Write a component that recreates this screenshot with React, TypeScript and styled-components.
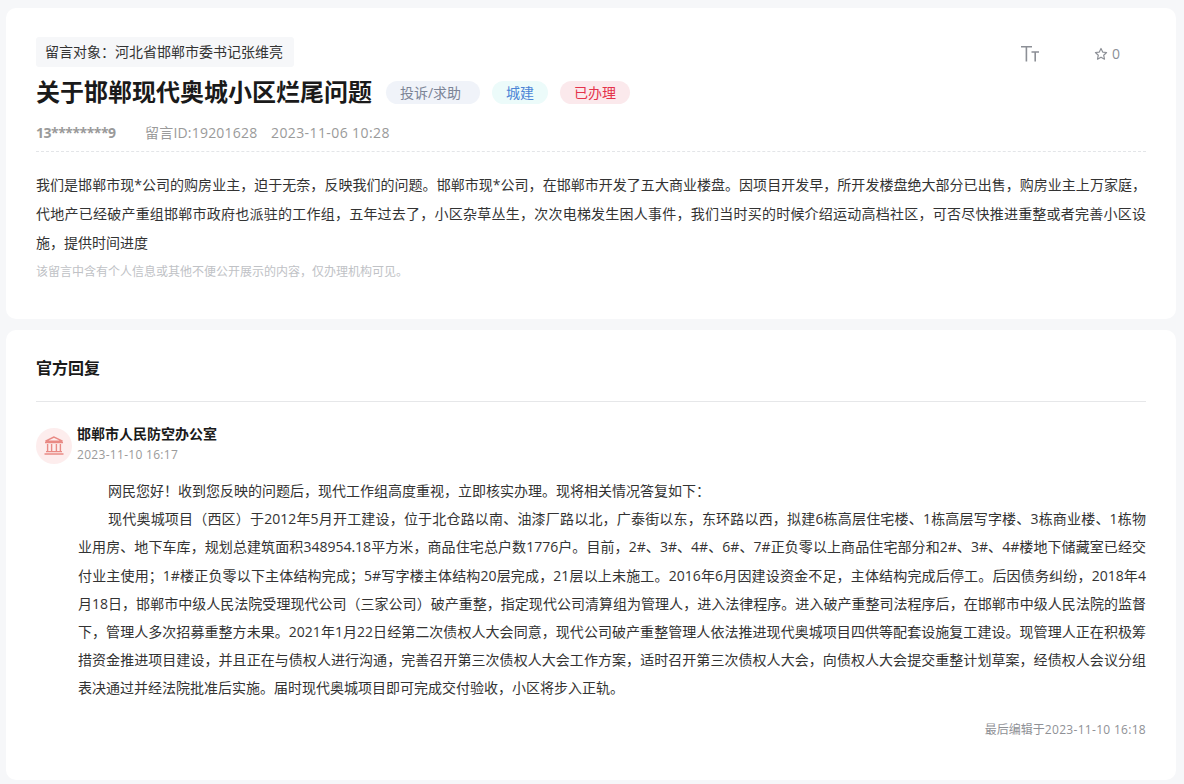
import React from "react";
import styled, { createGlobalStyle } from "styled-components";

const Global = createGlobalStyle`
  html, body { margin: 0; padding: 0; background: #f6f7f9; }
  body { font-family: "Open Sans", "Noto Sans CJK SC", sans-serif; }
`;
const Page = styled.div`
  width: 1184px; height: 784px; overflow: hidden; box-sizing: border-box;
  padding: 8px 8px 0 6px; display: flex; flex-direction: column; gap: 11px;
`;
const Card = styled.section<{ $h: number }>`
  background: #fff; border-radius: 10px; height: ${p => p.$h}px; box-sizing: border-box;
  padding: 29px 30px 0; flex: none;
`;
const TopRow = styled.div`display: flex; justify-content: space-between; align-items: flex-start;`;
const Target = styled.div`
  background: #f6f7f9; border-radius: 3px; height: 30px; line-height: 30px; padding: 0 11px 0 9px;
  font-size: 14px; color: #333;
`;
const Tools = styled.div`display: flex; align-items: center; color: #8c8f96; margin-top: 7px; padding-right: 26px;`;
const Fav = styled.span`display: inline-flex; align-items: center; gap: 4px; font-size: 14px; margin-left: 55px;`;
const TitleRow = styled.div`display: flex; align-items: center; margin-top: 10px; height: 30px;`;
const Title = styled.h1`margin: 0 14px 0 0; font-size: 24px; font-weight: 700; color: #1a1a1a; line-height: 30px;`;
const Tag = styled.span<{ $bg: string; $fg: string; $w: number; $shift?: number }>`
  width: ${p => p.$w}px; height: 23px; line-height: 23px; text-align: center; border-radius: 12px; font-size: 14px;
  box-sizing: border-box; padding-right: ${p => p.$shift ?? 0}px;
  background: ${p => p.$bg}; color: ${p => p.$fg}; margin-right: 12px;
`;
const Meta = styled.div`
  display: flex; margin-top: 14px; height: 30px; line-height: 24px; font-size: 14px; color: #9a9a9a;
  border-bottom: 1px dashed #e3e5e8;
`;
const User = styled.b`font-weight: 700; width: 109px; letter-spacing: -0.5px;`;
const MetaId = styled.span`width: 126px; letter-spacing: 0.2px;`;
const MetaDate = styled.span`letter-spacing: 0.4px;`;
const Body = styled.p`margin: 18px 0 0; font-size: 14px; line-height: 29px; color: #333; text-align: justify;`;
const Note = styled.p`margin: 5px 0 0; font-size: 12px; line-height: 20px; color: #c0c2c6;`;
const ReplyHead = styled.h2`
  margin: -1px 0 0; font-size: 16px; font-weight: 700; color: #1a1a1a; line-height: 20px; height: 43px;
  border-bottom: 1px solid #e6e7e9;
`;
const Org = styled.div`display: flex; gap: 5px; margin-top: 24px; align-items: center;`;
const Avatar = styled.div`
  width: 36px; height: 36px; border-radius: 50%; background: #fdeded; display: flex; align-items: center; justify-content: center;
`;
const OrgName = styled.div`font-size: 14px; font-weight: 700; color: #1a1a1a; line-height: 20px; margin-top: -2px;`;
const OrgDate = styled.div`font-size: 12px; color: #9a9a9a; line-height: 20px; margin-top: 1px; letter-spacing: 0.3px;`;
const Reply = styled.div`margin: 12px 0 0 42px; font-size: 14px; line-height: 28.2px; color: #333; text-align: justify;`;
const Indent = styled.p`margin: 0; text-indent: 2.15em;`;
const Edited = styled.div`margin-top: 17px; text-align: right; font-size: 12px; line-height: 20px; color: #8f9196;`;
const EditedDate = styled.span`letter-spacing: 0.3px;`;

export default function App() {
  return (
    <Page>
      <Global />
      <Card $h={311}>
        <TopRow>
          <Target>留言对象：河北省邯郸市委书记张维亮</Target>
          <Tools>
            <svg width="18" height="16" viewBox="0 0 18 16" fill="none" stroke="currentColor" strokeWidth="1.6" aria-label="字号">
              <path d="M0 .8h11M5.4 .8V15.5M10.5 6h7.5M14.2 6v9.5" />
            </svg>
            <Fav>
              <svg width="14" height="14" viewBox="0 0 24 24" fill="none" stroke="currentColor" strokeWidth="2" strokeLinejoin="round">
                <path d="M12 2.5l2.9 6.2 6.7.8-5 4.6 1.4 6.7L12 17.4l-6 3.4 1.4-6.7-5-4.6 6.7-.8z" />
              </svg>
              0
            </Fav>
          </Tools>
        </TopRow>
        <TitleRow>
          <Title>关于邯郸现代奥城小区烂尾问题</Title>
          <Tag $bg="#f0f3f9" $fg="#7c8496" $w={94} $shift={5}>投诉/求助</Tag>
          <Tag $bg="#ecfbfa" $fg="#4b84d6" $w={56}>城建</Tag>
          <Tag $bg="#fbe9ec" $fg="#e4334b" $w={70}>已办理</Tag>
        </TitleRow>
        <Meta>
          <User>13********9</User>
          <MetaId>留言ID:19201628</MetaId>
          <MetaDate>2023-11-06 10:28</MetaDate>
        </Meta>
        <Body>
          我们是邯郸市现*公司的购房业主，迫于无奈，反映我们的问题。邯郸市现*公司，在邯郸市开发了五大商业楼盘。因项目开发早，所开发楼盘绝大部分已出售，购房业主上万家庭，代地产已经破产重组邯郸市政府也派驻的工作组，五年过去了，小区杂草丛生，次次电梯发生困人事件，我们当时买的时候介绍运动高档社区，可否尽快推进重整或者完善小区设施，提供时间进度
        </Body>
        <Note>该留言中含有个人信息或其他不便公开展示的内容，仅办理机构可见。</Note>
      </Card>
      <Card $h={450}>
        <ReplyHead>官方回复</ReplyHead>
        <Org>
          <Avatar>
            <svg width="20" height="19" viewBox="0 0 20 19" fill="none" stroke="#e98a85" strokeWidth="1.4">
              <path d="M10 1L1.5 5.2h17zM1 6.6h18M3.6 8v7M7.6 8v7M12.4 8v7M16.4 8v7M2 15.6h16M0.5 18h19" />
            </svg>
          </Avatar>
          <div>
            <OrgName>邯郸市人民防空办公室</OrgName>
            <OrgDate>2023-11-10 16:17</OrgDate>
          </div>
        </Org>
        <Reply>
          <Indent>网民您好！收到您反映的问题后，现代工作组高度重视，立即核实办理。现将相关情况答复如下：</Indent>
          <Indent>现代奥城项目（西区）于2012年5月开工建设，位于北仓路以南、油漆厂路以北，广泰街以东，东环路以西，拟建6栋高层住宅楼、1栋高层写字楼、3栋商业楼、1栋物业用房、地下车库，规划总建筑面积348954.18平方米，商品住宅总户数1776户。目前，2#、3#、4#、6#、7#正负零以上商品住宅部分和2#、3#、4#楼地下储藏室已经交付业主使用；1#楼正负零以下主体结构完成；5#写字楼主体结构20层完成，21层以上未施工。2016年6月因建设资金不足，主体结构完成后停工。后因债务纠纷，2018年4月18日，邯郸市中级人民法院受理现代公司（三家公司）破产重整，指定现代公司清算组为管理人，进入法律程序。进入破产重整司法程序后，在邯郸市中级人民法院的监督下，管理人多次招募重整方未果。2021年1月22日经第二次债权人大会同意，现代公司破产重整管理人依法推进现代奥城项目四供等配套设施复工建设。现管理人正在积极筹措资金推进项目建设，并且正在与债权人进行沟通，完善召开第三次债权人大会工作方案，适时召开第三次债权人大会，向债权人大会提交重整计划草案，经债权人会议分组表决通过并经法院批准后实施。届时现代奥城项目即可完成交付验收，小区将步入正轨。</Indent>
        </Reply>
        <Edited>最后编辑于<EditedDate>2023-11-10 16:18</EditedDate></Edited>
      </Card>
    </Page>
  );
}
